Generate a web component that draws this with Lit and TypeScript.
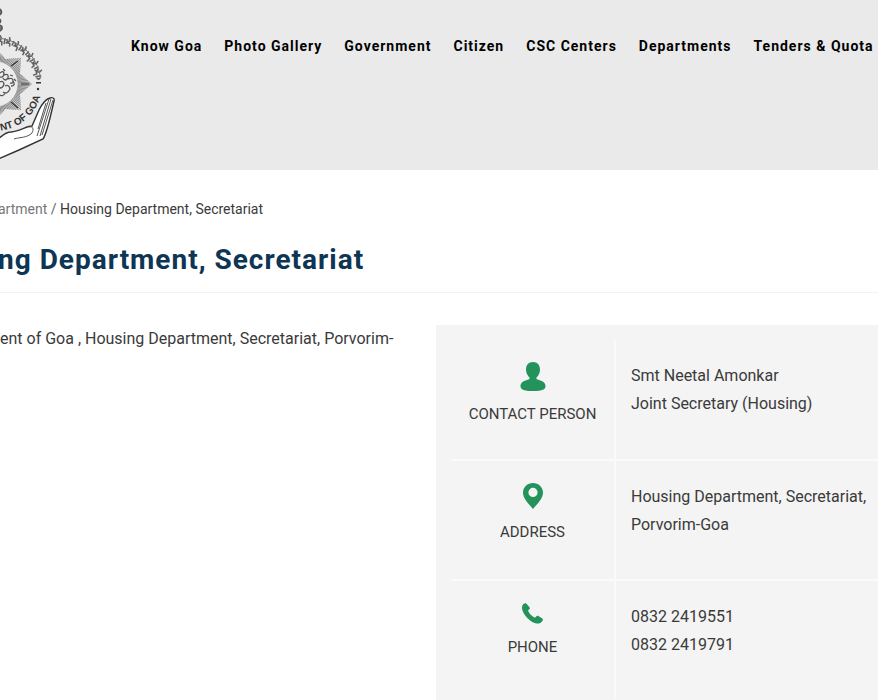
import { LitElement, html, css, svg } from "lit";
import { customElement } from "lit/decorators.js";

const NAV = ["Know Goa", "Photo Gallery", "Government", "Citizen", "CSC Centers", "Departments", "Tenders & Quota"];

const person = svg`<svg class="icon" width="26" height="29" viewBox="0 0 26 29" aria-hidden="true">
  <path d="M13 0C17.500 0 20 3 20 7.500C20 11 18.500 13.500 16.500 15.500C16 17 17 17.500 19 18C23 19 25.500 21 25.500 24C25.500 27.500 23 29 13 29S.5 27.500.5 24C.5 21 3 19 7 18C9 17.500 10 17 9.500 15.500C7.500 13.500 6 11 6 7.500C6 3 8.500 0 13 0Z"/></svg>`;
const pin = svg`<svg class="icon" width="20" height="26" viewBox="0 0 20 26" aria-hidden="true">
  <path fill-rule="evenodd" d="M10 0C15.500 0 20 4.200 20 9.700C20 15 15 20 10 26C5 20 0 15 0 9.700C0 4.200 4.500 0 10 0ZM10 4.800A4.600 4.600 0 1 0 10 14A4.600 4.600 0 1 0 10 4.800Z"/></svg>`;
const phone = svg`<svg class="icon" width="21" height="21" viewBox="0 0 21 21" aria-hidden="true">
  <path d="M1.500 1C2.500.2 3.500-.2 4.500.7L7.500 4.200C8 5 8 5.700 7 6.500L6 7.500C7 10.500 10 13.500 13 14.800L14.500 13.300C15.200 12.700 16 12.700 16.800 13.200L20.300 15.500C21.300 16.300 21 17.300 20.200 18.300C18.500 20.600 16.500 21 13.500 20.300C7.500 18.500 1.500 12 .2 6.500C-.2 4 .1 2.300 1.500 1Z"/></svg>`;

const ROWS = [
  { icon: person, label: "CONTACT PERSON", lines: ["Smt Neetal Amonkar", "Joint Secretary (Housing)"] },
  { icon: pin, label: "ADDRESS", lines: ["Housing Department, Secretariat,", "Porvorim-Goa"] },
  { icon: phone, label: "PHONE", lines: ["0832 2419551", "0832 2419791"] },
];

/* The seal's centre, in the emblem's own units. */
const CX = -5;
const CY = 84;
const at = (r: number, deg: number) => {
  const a = (deg * Math.PI) / 180;
  return `${(CX + r * Math.cos(a)).toFixed(2)} ${(CY + r * Math.sin(a)).toFixed(2)}`;
};

/* Eight-pointed star and its hatching. */
const starPath = "M" + Array.from({ length: 16 }, (_, i) => at(i % 2 ? 27 : 37, i * 22.5)).join("L") + "Z";
const hatch = Array.from({ length: 120 }, (_, i) => `M${at(20, i * 3)}L${at(37, i * 3)}`).join("");

/* Ornamental band over the upper half of the seal. */
const band = Array.from({ length: 14 }, (_, i) => {
  const d = -83 + i * 5.6;
  const low = [39, 41, 40, 42][i % 4];
  return i % 2
    ? `M${at(47, d)}L${at(low, d)}M${at(46, d + 2)}L${at(44, d + 4)}L${at(42, d + 2)}`
    : `M${at(49, d - 1)}L${at(46, d + 1)}L${at(43, d - 1)}L${at(43, d + 2)}L${at(low, d + 3)}`;
}).join("");

@customElement("goa-emblem")
export class GoaEmblem extends LitElement {
  static styles = css`
    :host { display: block; }
    .seal { display: block; }
    .motto { font: 700 10px "Liberation Sans", Arial, sans-serif; fill: #333; }
  `;
  render() {
    return html`<svg class="seal" width="60" height="170" viewBox="0 0 60 170" role="img" aria-label="Government of Goa">
      <defs>
        <path id="lower" d=${`M${at(47, 83)}A47 47 0 0 0 ${at(47, 0)}`}/>
        <clipPath id="star"><path d=${starPath}/></clipPath>
      </defs>
      <path d="M-2 8Q3 10 1 14Q0 15 -2 15M-2 18Q2 20 0 23M-2 25Q3 25 2 29Q0 32 -2 31" fill="#777" stroke="#555" stroke-width="1.400"/>
      <path d=${starPath} fill="#d2d2d2"/>
      <path d=${hatch} clip-path="url(#star)" stroke="#777" stroke-width=".8"/>
      <circle cx="-5" cy="84" r="23" fill="#ececec" stroke="#999" stroke-width=".6"/>
      <g fill="none" stroke="#555" stroke-width="1.300">
        <path d="M0 73Q4 70 4 74Q3 78 0 77M4 75Q9 73 8 78Q5 82 3 78M8 79Q13 77 13 81Q13 84 10 83M0 82Q3 80 4 84Q3 88 0 88M5 86Q9 84 10 89Q7 95 3 92M11 86Q16 86 13 81M0 95Q3 97 5 93M3 69L5 71M10 75L13 76M14 79L16 81"/>
      </g>
      <path d="M11 66L18 61M21 84L29 84M11 102L18 108" stroke="#333" stroke-width="1.200"/>
      <path d=${band} fill="none" stroke="#606060" stroke-width="1.500"/>
      <path d=${`M${at(46, -83)}A46 46 0 0 1 ${at(46, -8)}`} fill="none" stroke="#777" stroke-width="1"/>
      <text class="motto"><textPath href="#lower">NT OF GOA</textPath></text>
      <g fill="#333"><circle cx="38" cy="89" r="1.200"/><path d="M36 82H41V83.500H36Z"/></g>
      <path d="M-2 159L19 150L43 139C46 135 50 119 54 101C55 98 52 97 50 98C46 99 42 104 39 110L32 126C27 126 20 131 11 132C5 132 1 137 -2 139Z" fill="#fff" stroke="#333" stroke-width="1.400"/>
      <path d="M14 139C20 137 27 138 32 133C34 129 33 126 29 127M49 99L37 136M51 99L40 136M53 100L42 135M46 103L38 129" fill="none" stroke="#555" stroke-width="1"/>
    </svg>`;
  }
}

@customElement("app-root")
export class AppRoot extends LitElement {
  static styles = css`
    :host { display: flex; flex-direction: column; min-height: 100vh; overflow: hidden; background: #fff; color: #3a3a3a; font: 16px/28px Roboto, sans-serif; }
    .header { display: flex; align-items: flex-start; gap: 71px; background: #eaeaea; overflow: hidden; }
    .emblem { flex: none; }
    .nav { display: flex; gap: 22px; margin: 0; padding: 32px 0 0; list-style: none; font-size: 14px; white-space: nowrap; }
    .nav-link { color: #000; font-weight: 700; letter-spacing: 1px; text-decoration: none; }
    .main { display: flex; flex-direction: column; flex: 1; }
    .lead { border-bottom: 1px solid #f2f2f2; white-space: nowrap; }
    .crumbs { margin-left: -2px; padding: 25px 0 0; font-size: 14px; }
    .crumb-link { color: #777; text-decoration: none; }
    .sep { color: #666; }
    .title { margin: 0 0 0 -2px; padding: 17px 0 12px; color: #0f3554; font-size: 28px; line-height: 40px; font-weight: 700; letter-spacing: 1px; }
    .content { display: grid; flex: 1; grid-template-columns: minmax(0, 436fr) minmax(0, 442fr); padding-top: 32px; }
    .intro { margin: 0; white-space: nowrap; }
    .panel { background: #f4f4f4; padding: 15px 0 0 15px; }
    .table { width: 100%; border-collapse: collapse; table-layout: fixed; }
    .row { height: 120px; border-bottom: 2px solid #fafafa; }
    .row:last-child { height: 119px; border-bottom: 0; }
    .key { width: 163px; padding: 22px 0 0; border-right: 2px solid #fafafa; vertical-align: top; font-weight: 400; font-size: 15px; text-align: center; white-space: nowrap; }
    .icon { display: block; margin: 0 auto 9px; fill: #23935b; }
    .value { padding: 22px 0 0 15px; vertical-align: top; white-space: nowrap; }
    .line { display: block; }
  `;
  render() {
    return html`
      <header class="header">
        <goa-emblem class="emblem"></goa-emblem>
        <nav><ul class="nav">${NAV.map((n) => html`<li><a class="nav-link" href="#">${n}</a></li>`)}</ul></nav>
      </header>
      <main class="main">
        <div class="lead">
          <nav class="crumbs" aria-label="Breadcrumb"><a class="crumb-link" href="#">artment</a><span class="sep"> / </span><span>Housing Department, Secretariat</span></nav>
          <h1 class="title">ng Department, Secretariat</h1>
        </div>
        <div class="content">
          <p class="intro">ent of Goa , Housing Department, Secretariat, Porvorim-</p>
          <section class="panel">
            <table class="table"><tbody>
              ${ROWS.map((r) => html`<tr class="row"><th class="key" scope="row">${r.icon}${r.label}</th><td class="value">${r.lines.map((l) => html`<span class="line">${l}</span>`)}</td></tr>`)}
            </tbody></table>
          </section>
        </div>
      </main>`;
  }
}
